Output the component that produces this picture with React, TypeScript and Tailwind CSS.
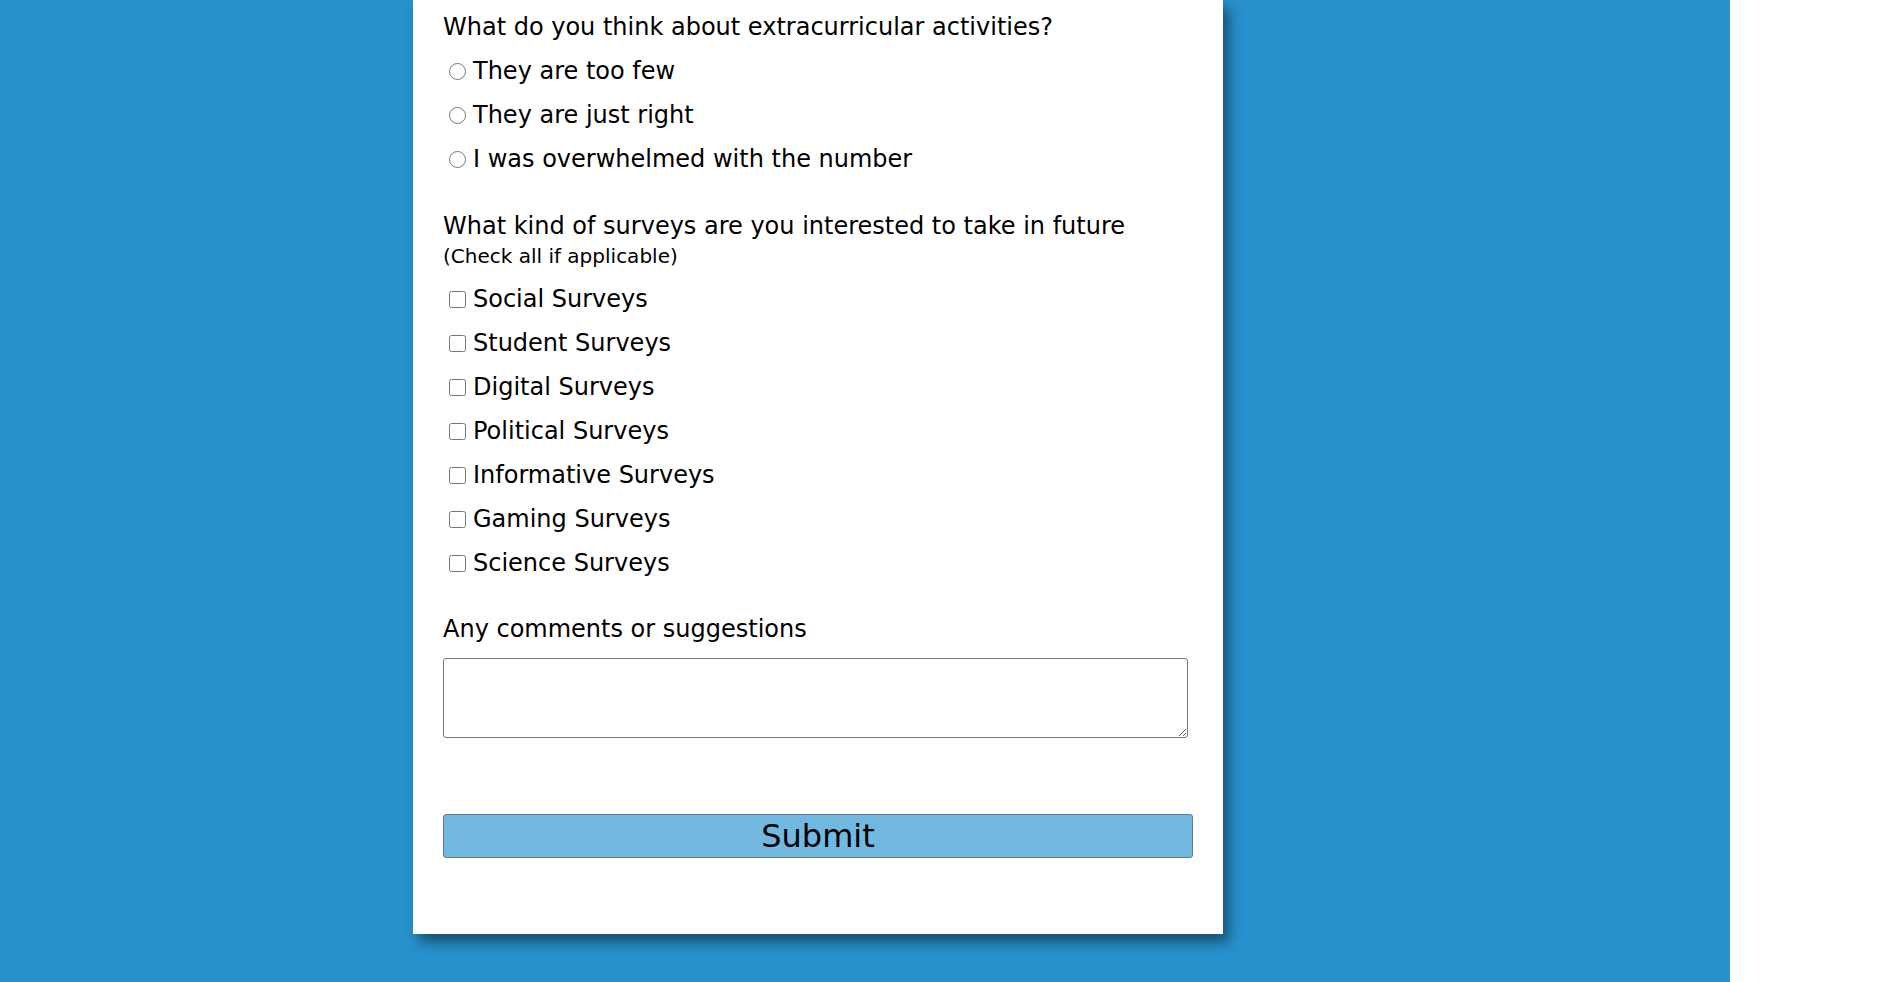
import React from "react";

const radios = ["They are too few", "They are just right", "I was overwhelmed with the number"];
const checks = [
  "Social Surveys",
  "Student Surveys",
  "Digital Surveys",
  "Political Surveys",
  "Informative Surveys",
  "Gaming Surveys",
  "Science Surveys",
];

export default function App() {
  return (
    <div
      className="flex w-[1890px] h-[982px] overflow-hidden bg-white text-black"
      style={{ fontFamily: '"DejaVu Sans", Verdana, sans-serif' }}
    >
      <div className="w-[1730px] h-[982px] bg-[#2791cd] shrink-0">
        <div className="ml-[413px] w-[810px] bg-white shadow-[6px_8px_12px_rgba(0,0,0,0.45)] pl-[30px] pr-[30px] pt-[13px] pb-[76px]">
          <div className="text-[24px] leading-[28px]">What do you think about extracurricular activities?</div>
          <div className="mt-[8px]">
            {radios.map((r) => (
              <label key={r} className="flex items-center h-[44px] pl-[6px] text-[24px]">
                <input type="radio" name="extra" className="m-0 w-[17px] h-[17px] shrink-0" />
                <span className="ml-[7px] leading-[28px]">{r}</span>
              </label>
            ))}
          </div>
          <div className="mt-[31px] text-[24px] leading-[28px]">What kind of surveys are you interested to take in future</div>
          <div className="mt-[4px] text-[20px] leading-[24px]">(Check all if applicable)</div>
          <div className="mt-[9px]">
            {checks.map((c) => (
              <label key={c} className="flex items-center h-[44px] pl-[6px] text-[24px]">
                <input type="checkbox" className="m-0 w-[17px] h-[17px] shrink-0" />
                <span className="ml-[7px] leading-[28px]">{c}</span>
              </label>
            ))}
          </div>
          <div className="mt-[30px] text-[24px] leading-[28px]">Any comments or suggestions</div>
          <textarea className="block mt-[15px] w-[745px] h-[80px] border border-[#767676] rounded-[3px] bg-white" />
          <button
            type="button"
            className="block mt-[76px] w-[750px] h-[44px] bg-[#72b9e2] border border-[#66798a] rounded-[3px] text-[32px] leading-[40px] text-black"
          >
            Submit
          </button>
        </div>
      </div>
      <div className="flex-1 bg-white" />
    </div>
  );
}
